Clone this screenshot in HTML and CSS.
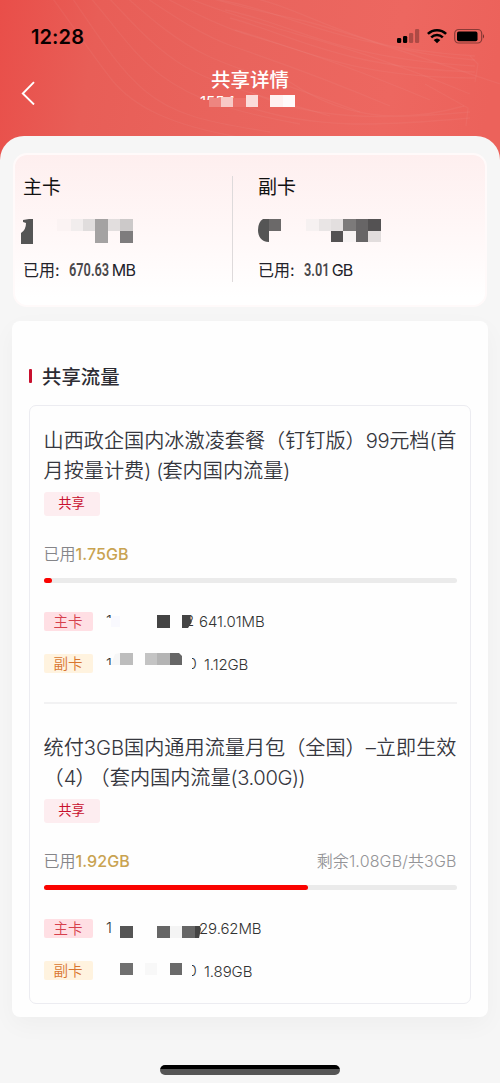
FILE: index.html
```html
<!DOCTYPE html>
<html lang="zh-CN">
<head>
<meta charset="utf-8">
<title>共享详情</title>
<link rel="stylesheet" href="styles.css">
</head>
<body>
<div class="screen">
  <svg class="waves" width="500" height="160" viewBox="0 0 500 160" fill="none" stroke="#fff" stroke-opacity=".045" stroke-width="1.3">
    <path d="M50-5C72 24 91 54 112 80S170 126 245 138M70-5C96 32 116 66 144 90S205 122 270 132M88-5C114 24 132 54 162 76S225 110 300 124M106-5C132 22 154 48 184 66S254 94 330 116M124-5C152 20 178 42 208 56S280 82 360 112M142-5C176 18 204 36 232 46S310 72 390 106M160-5C196 14 224 28 252 36S340 62 430 100M180-5C222 12 250 20 276 28S370 52 470 94M200-5C242 8 272 14 300 20S400 50 500 84"/>
    <path d="M220 0C290 12 330 46 475 56M240-5C310 8 350 50 475 60M225 10C290 22 330 58 475 66M230 18C290 34 340 68 475 72M235 30C300 48 350 78 475 78"/>
    <path d="M250 92C310 120 380 120 470 112M240 104C310 130 380 126 470 118M280 75C340 120 400 124 464 106"/>
    <path d="M470 56L478 64L475 82M425 84L468 108L466 126"/>
  </svg>
  <header class="top">
    <div class="status">
      <span class="clock">12:28</span>
      <svg class="status-icons" width="90" height="18" viewBox="0 0 90 18">
        <rect x="1" y="10" width="4.2" height="5" rx="1.2"/>
        <rect x="7" y="8" width="4.2" height="7" rx="1.2"/>
        <rect x="13" y="5" width="4.2" height="10" rx="1.2" opacity=".27"/>
        <rect x="19" y="1" width="4.2" height="14" rx="1.2" opacity=".27"/>
        <g fill="none" stroke="#000" stroke-width="2.5">
          <path d="M31.900 5.900a13 13 0 0 1 18.200 0"/>
          <path d="M35.200 9.400a8.300 8.300 0 0 1 11.600 0"/>
        </g>
        <path d="M37.700 12a4.800 4.800 0 0 1 6.600 0L41 15.200Z"/>
        <rect x="58.700" y="1.500" width="27" height="13.500" rx="4" fill="none" stroke="#000" stroke-opacity=".42" stroke-width="1.200"/>
        <rect x="61" y="3.600" width="20.500" height="9.600" rx="1.800"/>
        <path d="M87 5.900q2.200 2.300 0 4.600Z" opacity=".5"/>
      </svg>
    </div>
    <div class="nav">
      <svg class="back" width="16" height="24" viewBox="0 0 16 24" fill="none" stroke="#fff" stroke-width="1.9"><path d="M13 1.200L1.800 12.500L13 23.500"/></svg>
      <div class="nav-center">
        <h1>共享详情</h1>
        <svg class="nav-mask" width="100" height="16" viewBox="0 0 100 16">
          <text class="nav-number" x="-1" y="12.500">155 1</text>
          <path fill="#e9635c" d="M-1 6H8V14H-1zM8 4H48V14H8z"/>
          <path fill="#ee8580" d="M8 4h12v9H8z"/><path fill="#f8c9c6" d="M20 3h12v10H20z"/><path fill="#ec706a" d="M32 4h13v9H32z"/><path fill="#fbdcda" d="M45 1h12v12H45z"/><path fill="#fff1f0" d="M69 1h13v12H69z"/><path fill="#fffafa" d="M82 1h12v12H82z"/>
        </svg>
      </div>
    </div>
  </header>
  <main class="sheet">
    <section class="summary">
      <div class="card">
        <h2>主卡</h2>
        <svg class="card-mask" width="130" height="26" viewBox="0 0 130 26">
          <path fill="#555" d="M0 26V15Q5 12 5 5L2 4V2L8 1H12V26Z"/>
          <path fill="#fbf3f3" d="M36 1h14v12H36z"/><path fill="#f1eded" d="M50 1h12v12H50z"/><path fill="#e0dddd" d="M62 1h12v12H62z"/><path fill="#a4a2a2" d="M74 1h13v24H74z"/><path fill="#e2dede" d="M87 1h12v12H87z"/><path fill="#ccc9c9" d="M99 1h13v12H99z"/><path fill="#7e7c7d" d="M99 13h13v12H99z"/>
        </svg>
        <p>已用:<b class="num num-main">670.63</b><span class="unit">MB</span></p>
      </div>
      <div class="card card-second">
        <h2>副卡</h2>
        <svg class="card-mask" width="130" height="26" viewBox="0 0 130 26">
          <path fill="#555" d="M13 1V24C5 24 2 18 2 12Q2 4 7 1Z"/><path fill="#6b6969" d="M13 1h12v12H13z"/>
          <path fill="#f6f1f1" d="M50 1h13v12H50z"/><path fill="#e9e5e5" d="M63 1h12v12H63z"/><path fill="#e3dfdf" d="M75 1h12v12H75z"/><path fill="#7c7a7a" d="M87 1h13v12H87z"/><path fill="#676566" d="M100 1h12v23h-12z"/><path fill="#545253" d="M112 1h13v12h-13zM75 13h12v11H75z"/><path fill="#e2dddd" d="M112 13h13v11h-13z"/><path fill="#f7f3f3" d="M87 13h13v11H87z"/>
        </svg>
        <p>已用:<b class="num num-second">3.01</b><span class="unit">GB</span></p>
      </div>
    </section>
    <section class="panel">
      <h2 class="section-title">共享流量</h2>
      <div class="group">
        <article class="plan">
          <h3><span>山西政企国内冰激凌套餐（钉钉版）<i class="mid">99</i>元档<i class="mid">(</i>首</span><span>月按量计费<i>)</i><i class="gap">(</i>套内国内流量<i>)</i></span></h3>
          <span class="share-tag">共享</span>
          <div class="usage"><span>已用<b>1.75GB</b></span></div>
          <div class="bar"><div class="fill" style="width:2%"></div></div>
          <div class="line"><span class="tag main">主卡</span>
            <svg class="line-mask" width="93" height="24" viewBox="0 0 93 24"><text x="0" y="17">1</text><text x="79" y="17">2</text><path fill="#fefefe" d="M-1 9H6V20H-1z"/><path fill="#f9f9fe" d="M5 7h9v11H5z"/><path fill="#444" d="M51 6h13v13H51zM76 6h9q-1 3 0 5q2 1-1 5l-2 3h-6z"/></svg>
            <span class="value">641.01MB</span></div>
          <div class="line"><span class="tag sub">副卡</span>
            <svg class="line-mask" width="98" height="24" viewBox="0 0 98 24"><text x="0" y="17">1</text><text x="81.500" y="17">0</text><path fill="#fefefe" d="M-1 13H7V20H-1zM79 2H86V20H79z"/><path fill="#f7f7f7" d="M9 2l5-1v12H5Z"/><path fill="#bdbdbd" d="M14 1h13v12H14z"/><path fill="#c4c4c4" d="M39 1h12v12H39z"/><path fill="#b4b4b4" d="M51 1h13v12H51z"/><path fill="#666" d="M64 1h9l3 3v9H64z"/></svg>
            <span class="value">1.12GB</span></div>
        </article>
        <article class="plan second">
          <h3><span>统付<i class="wide">3GB</i>国内通用流量月包（全国）<i class="wide">–</i>立即生效</span><span>（<i>4</i>）<i class="pull">（</i>套内国内流量<i class="mid">(3.00G))</i></span></h3>
          <span class="share-tag">共享</span>
          <div class="usage"><span>已用<b>1.92GB</b></span><span class="remain">剩余1.08GB/共3GB</span></div>
          <div class="bar"><div class="fill" style="width:64%"></div></div>
          <div class="line"><span class="tag main">主卡</span>
            <svg class="line-mask" width="93" height="24" viewBox="0 0 93 24"><text x="0" y="17">1</text><path fill="#555" d="M14 10h13v12H14z"/><path fill="#666" d="M51 10h13v12H51zM76 10h13v12H76z"/><path fill="#f4f4f4" d="M64 10h12v12H64z"/><path fill="#444" d="M89 10h5l1 3-2 9h-4z"/></svg>
            <span class="value">29.62MB</span></div>
          <div class="line"><span class="tag sub">副卡</span>
            <svg class="line-mask" width="98" height="24" viewBox="0 0 98 24"><text x="81.500" y="17">0</text><path fill="#fefefe" d="M79 2H86V20H79z"/><path fill="#707070" d="M14 4h13v12H14z"/><path fill="#f8f8f8" d="M39 4h12v12H39z"/><path fill="#6a6a6a" d="M64 4h12v12H64z"/></svg>
            <span class="value">1.89GB</span></div>
        </article>
      </div>
    </section>
    <div class="home"></div>
  </main>
</div>
</body>
</html>
```
FILE: styles.css
```css
* { box-sizing: border-box; }
body { margin: 0; font-family: Inter, "Noto Sans CJK SC", sans-serif; color: #36373e; text-spacing-trim: space-all; }
h1, h2, h3, p { margin: 0; font-weight: 400; }
i { font-style: normal; letter-spacing: -.9px; }
.wide { letter-spacing: 0; }
.mid { letter-spacing: -.4px; }
.pull { margin-left: -6px; letter-spacing: 0; }
.screen { position: relative; width: 500px; height: 1083px; overflow: hidden; background: linear-gradient(100deg, #e94e49 0, #e85e57 100px, #e9645d 250px, #ed6760 400px, #ec625b 500px); }
.waves { position: absolute; left: 0; top: 0; }
.top { position: relative; height: 136px; }
.status { height: 66px; display: flex; justify-content: space-between; padding: 25px 14px 0 31px; }
.clock { color: #080000; font-weight: 600; font-size: 20px; line-height: 24px; letter-spacing: .1px; }
.status-icons { margin-top: 3px; }
.nav { height: 70px; display: flex; padding-left: 21px; }
.back { margin-top: 15px; flex: none; }
.nav-center { flex: 1; margin-right: 37px; display: flex; flex-direction: column; align-items: center; }
h1 { color: #fff; font-size: 19.500px; line-height: 28px; font-weight: 500; }
.nav-mask { overflow: visible; margin-left: 1px; }
.nav-number { fill: #fff; font-size: 15px; }
.sheet { position: relative; height: 947px; border-radius: 24px 24px 0 0; background: #f6f6f6; padding: 17px 12px 0; }
.summary { height: 154px; margin: 0 1px; border: 2px solid #fffafa; border-radius: 14px; background: linear-gradient(#feefef, #fff7f7 50%, #fff 95%); display: flex; padding: 21px 8px 0 6px; }
.card { width: 212px; height: 106px; border-right: 1px solid #dedadb; }
.card-second { border: 0; padding-left: 23px; }
.card h2 { color: #111; font-size: 19px; line-height: 24px; padding-left: 2px; }
.card-mask { display: block; margin: 18px 0 12px; }
.card p { color: #22222a; font-size: 16px; line-height: 28px; padding-left: 2px; display: flex; white-space: nowrap; }
.num { display: block; font: 600 18.500px/28px Roboto, sans-serif; color: #4a484b; transform-origin: 0 50%; transform: scaleX(.69); margin-left: 9px; }
.num-main { width: 43px; }
.num-second { width: 28px; }
.unit { letter-spacing: -.7px; }
.panel { height: 696px; margin-top: 14px; padding: 40px 17px 0; border-radius: 8px; background: #fefefe; box-shadow: 0 8px 24px rgba(0, 0, 0, .035); }
.section-title { height: 28px; display: flex; align-items: center; color: #2c2c33; font-size: 19.400px; font-weight: 500; }
.section-title::before { content: ""; width: 3px; height: 14px; border-radius: 1px; background: #c8102e; margin: 2px 10px 0 0; }
.group { height: 599px; margin-top: 16px; border: 1px solid #ececf1; border-radius: 7px; padding: 0 13.500px; }
.plan { height: 298px; padding-top: 20px; border-bottom: 2px solid #f2f2f3; }
.plan.second { border: 0; padding-top: 29px; }
h3 { font-size: 20.150px; font-weight: 350; height: 59px; }
h3 span { display: block; height: 29.500px; line-height: 29.500px; white-space: nowrap; }
.gap { margin-left: 6px; }
.share-tag { display: block; width: 56px; height: 24px; margin-top: 7px; background: #fdedf0; border-radius: 3px; color: #c8102e; font-size: 13.300px; line-height: 22px; text-align: center; }
.usage { height: 24px; margin-top: 26px; line-height: 24px; display: flex; justify-content: space-between; font-size: 16px; font-weight: 350; color: #858589; white-space: nowrap; }
.usage b { font-weight: 500; color: #c9a351; letter-spacing: .1px; }
.remain { letter-spacing: .15px; color: #949497; }
.bar { height: 5px; margin: 12px 0 23px; border-radius: 3px; background: #ebebeb; }
.fill { height: 100%; border-radius: 3px; background: #fa0300; }
.line { height: 30px; margin-bottom: 12.500px; display: flex; align-items: center; }
.tag { width: 49px; height: 19px; margin-right: 13.500px; border-radius: 2px; text-align: center; font-size: 14.500px; line-height: 20px; font-weight: 350; }
.main { background: #ffdfe4; color: #d6404c; }
.sub { background: #fff3df; color: #d9762f; }
.line-mask { flex: none; overflow: visible; }
.line-mask text { fill: #333; font-size: 15px; font-weight: 300; }
.value { font-size: 15px; letter-spacing: -.1px; color: #333; font-weight: 300; padding-top: 1px; }
.home { width: 180px; height: 10px; margin: 48px auto 0; border-radius: 5px; background: linear-gradient(#000 4px, #555 4px); }
```
